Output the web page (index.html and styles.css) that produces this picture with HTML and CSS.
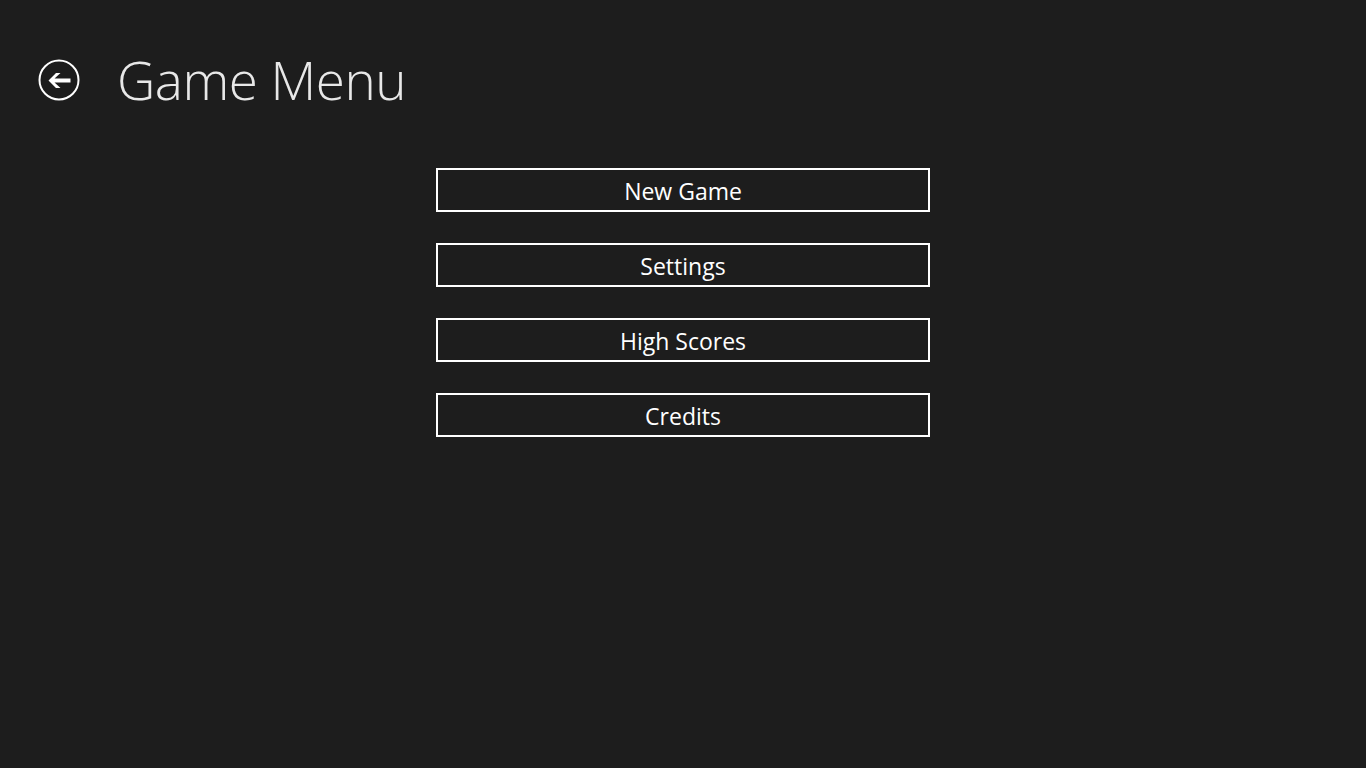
FILE: index.html
```html
<!DOCTYPE html>
<html>
<head>
<meta charset="utf-8">
<link rel="stylesheet" href="styles.css">
</head>
<body>
<div class="page">
  <header class="header">
    <button class="back" aria-label="Back">
      <svg width="42" height="42" viewBox="0 0 42 42">
        <circle cx="21" cy="21" r="19.5" fill="none" stroke="#fff" stroke-width="2"/>
        <path d="M10.5 21.5 L18 14 L22.5 14 L16.5 19.5 L32.5 19.5 L32.5 23.5 L16.5 23.5 L22.5 29 L18 29 Z" fill="#fff"/>
      </svg>
    </button>
    <h1 class="title">Game Menu</h1>
  </header>
  <main class="menu">
    <button class="item">New Game</button>
    <button class="item">Settings</button>
    <button class="item">High Scores</button>
    <button class="item">Credits</button>
  </main>
</div>
</body>
</html>
```
FILE: styles.css
```css
html, body {
  margin: 0;
  padding: 0;
  background: #1d1d1d;
  width: 1366px;
  height: 768px;
  overflow: hidden;
}
.page {
  font-family: "Open Sans", "Noto Sans", sans-serif;
  color: #fff;
}
.header {
  display: flex;
  align-items: center;
  height: 80px;
  padding: 40px 0 0 38px;
  box-sizing: content-box;
}
.back {
  width: 42px;
  height: 42px;
  padding: 0;
  margin: 0;
  border: none;
  background: none;
  display: flex;
}
.title {
  margin: 0 0 0 37px;
  font-weight: 300;
  font-size: 53px;
  color: #e8e8e8;
  letter-spacing: -0.5px;
  line-height: 80px;
}
.menu {
  display: flex;
  flex-direction: column;
  align-items: center;
  gap: 31px;
  margin-top: 48px;
}
.item {
  width: 494px;
  height: 44px;
  border: 2px solid #fff;
  background: #1d1d1d;
  color: #fff;
  font-family: "Open Sans", "Noto Sans", sans-serif;
  font-size: 23px;
  padding: 3px 0 0;
  margin: 0;
  line-height: 37px;
}
```
